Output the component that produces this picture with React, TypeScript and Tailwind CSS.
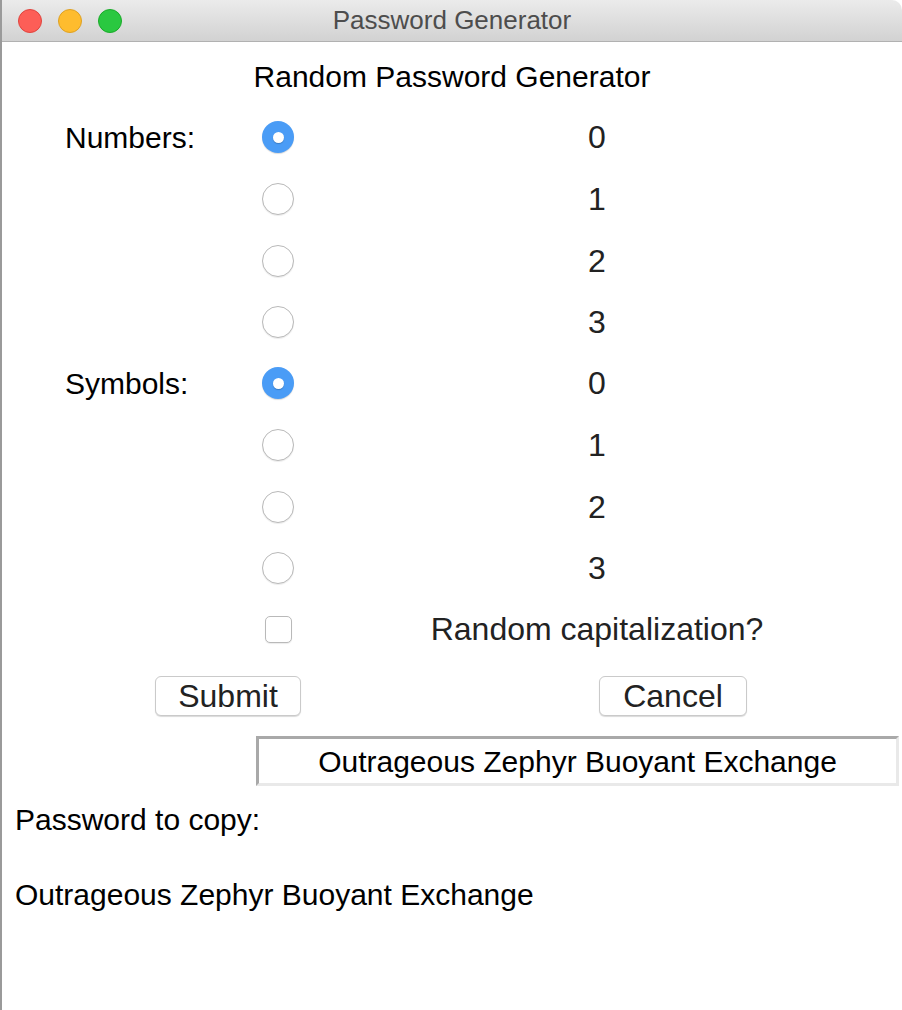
const font = { fontFamily: '"Liberation Sans", Arial, sans-serif' }

function Radio({ checked }: { checked: boolean }) {
  if (checked) {
    return (
      <div className="w-[32px] h-[32px] rounded-full bg-[#4a9cf6] flex items-center justify-center shadow-[0_1px_1px_rgba(0,0,0,0.15)]">
        <div className="w-[11px] h-[11px] rounded-full bg-white shadow-[0_1px_1px_rgba(0,0,0,0.2)]"></div>
      </div>
    )
  }
  return <div className="w-[32px] h-[32px] rounded-full bg-white border border-[#b9b9b9] shadow-[0_1px_1px_rgba(0,0,0,0.08)]"></div>
}

function OptionRow({ label, value, checked, h }: { label?: string; value: string; checked: boolean; h: string }) {
  return (
    <div className={`flex items-center ${h}`}>
      <div className="w-[260px] pl-[63px] text-[30px] text-black">{label}</div>
      <div className="w-[32px] flex justify-center">
        <Radio checked={checked} />
      </div>
      <div className="flex-1 pr-[2px] text-center text-[32px] text-[#222]">{value}</div>
    </div>
  )
}

export default function App() {
  return (
    <div className="w-[902px] h-[1010px] bg-white relative overflow-hidden border-l-2 border-[#9a9a9a]" style={font}>
      {/* title bar */}
      <div className="h-[42px] bg-gradient-to-b from-[#ebebeb] to-[#d2d2d2] border-b border-[#b1b1b1] rounded-tr-[10px] flex items-center relative">
        <div className="flex items-center gap-[16px] pl-[16px]">
          <div className="w-[24px] h-[24px] rounded-full bg-[#fd5e57] border border-[#e0443e]"></div>
          <div className="w-[24px] h-[24px] rounded-full bg-[#febc2e] border border-[#dea123]"></div>
          <div className="w-[24px] h-[24px] rounded-full bg-[#2ac840] border border-[#1aab29]"></div>
        </div>
        <div className="absolute inset-0 flex items-center justify-center text-[26px] text-[#4d4d4d]">Password Generator</div>
      </div>

      <div className="mt-[17px] text-center text-[30px] leading-[36px] text-black">Random Password Generator</div>

      <div className="mt-[11px]">
        <OptionRow label="Numbers:" value="0" checked h="h-[62px]" />
        <OptionRow value="1" checked={false} h="h-[62px]" />
        <OptionRow value="2" checked={false} h="h-[62px]" />
        <OptionRow value="3" checked={false} h="h-[60px]" />
        <OptionRow label="Symbols:" value="0" checked h="h-[62px]" />
        <OptionRow value="1" checked={false} h="h-[62px]" />
        <OptionRow value="2" checked={false} h="h-[62px]" />
        <OptionRow value="3" checked={false} h="h-[60px]" />
        <div className="flex items-center h-[62px]">
          <div className="w-[260px]"></div>
          <div className="w-[32px] flex justify-center">
            <div className="w-[27px] h-[27px] rounded-[5px] bg-white border border-[#b9b9b9] shadow-[0_1px_1px_rgba(0,0,0,0.08)]"></div>
          </div>
          <div className="flex-1 pr-[2px] text-center text-[32px] text-[#222]">Random capitalization?</div>
        </div>
      </div>

      <div className="mt-[16px] flex items-center">
        <button className="ml-[153px] w-[146px] h-[40px] rounded-[6px] bg-white border border-[#cacaca] shadow-[0_1px_1px_rgba(0,0,0,0.15)] text-[32px] leading-[36px] text-[#222]">Submit</button>
        <button className="ml-[298px] w-[148px] h-[40px] rounded-[6px] bg-white border border-[#cacaca] shadow-[0_1px_1px_rgba(0,0,0,0.15)] text-[32px] leading-[36px] text-[#222]">Cancel</button>
      </div>

      <div className="mt-[20px] ml-[254px] w-[643px] h-[50px] border-t-[3px] border-l-[3px] border-b-[3px] border-r-[3px] border-t-[#a9a9a9] border-l-[#a9a9a9] border-b-[#e9e9e9] border-r-[#e9e9e9] flex items-center justify-center text-[30px] text-black">
        Outrageous Zephyr Buoyant Exchange
      </div>

      <div className="mt-[16px] pl-[13px] text-[30px] leading-[36px] text-black">Password to copy:</div>
      <div className="mt-[39px] pl-[13px] text-[30px] leading-[36px] text-black">Outrageous Zephyr Buoyant Exchange</div>
    </div>
  )
}
